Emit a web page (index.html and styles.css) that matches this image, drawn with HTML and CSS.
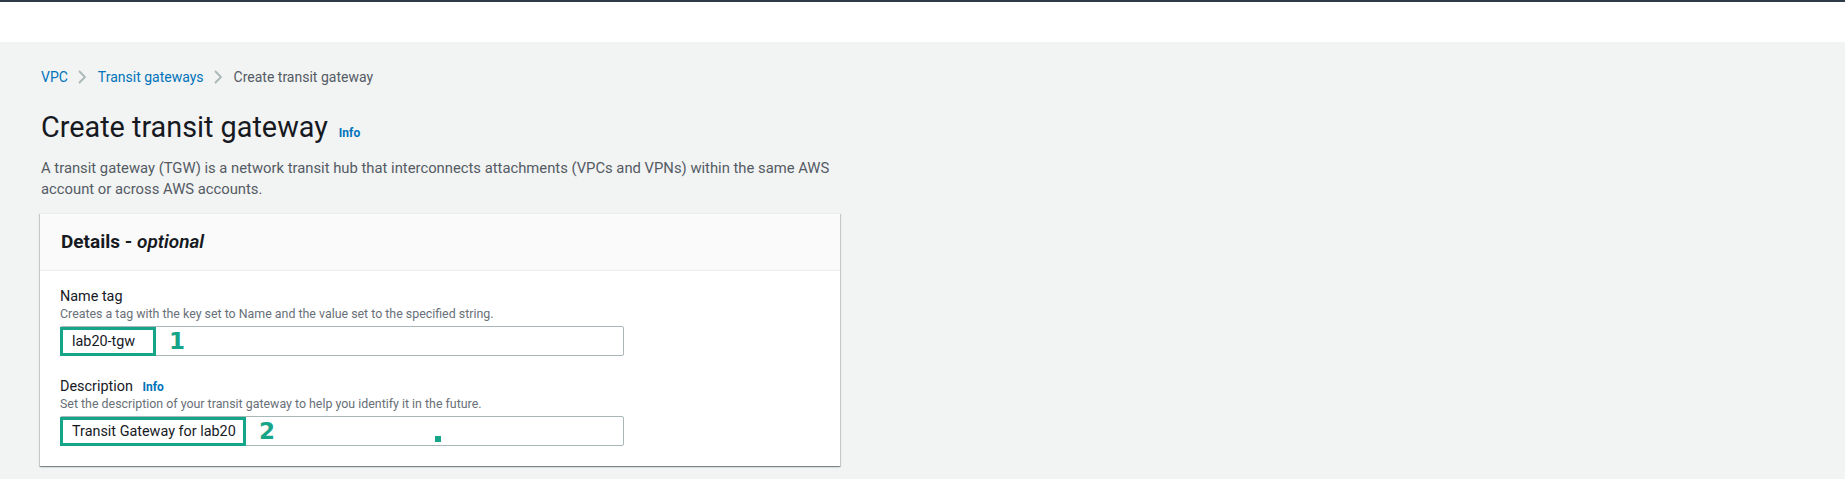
FILE: index.html
```html
<!DOCTYPE html>
<html lang="en">
<head>
<meta charset="utf-8">
<title>Create transit gateway</title>
<link rel="stylesheet" href="styles.css">
</head>
<body>
<header class="topbar"></header>
<main class="content">
  <nav class="breadcrumbs">
    <a class="crumb-link" href="#">VPC</a>
    <svg class="chev" viewBox="0 0 10 14" width="10" height="14"><path d="M2 1l6 6-6 6" fill="none" stroke="#aab7b8" stroke-width="1.8"/></svg>
    <a class="crumb-link" href="#">Transit gateways</a>
    <svg class="chev" viewBox="0 0 10 14" width="10" height="14"><path d="M2 1l6 6-6 6" fill="none" stroke="#aab7b8" stroke-width="1.8"/></svg>
    <span class="crumb-current">Create transit gateway</span>
  </nav>
  <div class="page-head">
    <h1 class="title">Create transit gateway</h1>
    <a class="info title-info" href="#">Info</a>
  </div>
  <p class="intro">A transit gateway (TGW) is a network transit hub that interconnects attachments (VPCs and VPNs) within the same AWS account or across AWS accounts.</p>
  <section class="card">
    <div class="card-head">Details - <em>optional</em></div>
    <div class="card-body">
      <div class="field">
        <div class="label">Name tag</div>
        <div class="hint">Creates a tag with the key set to Name and the value set to the specified string.</div>
        <div class="input">
          <span class="mark mark-1">lab20-tgw</span>
          <span class="num">1</span>
        </div>
      </div>
      <div class="field field-2">
        <div class="label">Description <a class="info" href="#">Info</a></div>
        <div class="hint">Set the description of your transit gateway to help you identify it in the future.</div>
        <div class="input">
          <span class="mark mark-2">Transit Gateway for lab20</span>
          <span class="num">2</span>
          <span class="dot"></span>
        </div>
      </div>
    </div>
  </section>
</main>
</body>
</html>
```

FILE: styles.css
```css
html, body {
  margin: 0;
  padding: 0;
}
body {
  font-family: Roboto, "Noto Sans", sans-serif;
  font-size: 14px;
  color: #16191f;
  background: #f2f3f3;
  height: 479px;
  overflow: hidden;
}
.topbar {
  height: 40px;
  background: #ffffff;
  border-top: 2px solid #2f3a48;
}
.content {
  padding: 25px 40px 0 41px;
  background: #f2f3f3;
}
.breadcrumbs {
  display: flex;
  align-items: center;
  height: 20px;
  line-height: 20px;
  font-size: 14px;
}
.crumb-link {
  color: #0073bb;
  text-decoration: none;
}
.chev {
  margin: 0 11px 0 9px;
}
.crumb-current {
  color: #545b64;
}
.page-head {
  display: flex;
  align-items: baseline;
  margin-top: 22px;
}
.title {
  margin: 0;
  font-size: 28.8px;
  line-height: 36px;
  font-weight: 400;
  color: #16191f;
}
.info {
  color: #0073bb;
  font-weight: 700;
  font-size: 12px;
  text-decoration: none;
}
.title-info {
  margin-left: 11px;
}
.intro {
  margin: 13px 0 0 0;
  width: 800px;
  font-size: 14.8px;
  line-height: 21px;
  color: #545b64;
}
.card {
  margin-top: 13px;
  margin-left: -1px;
  width: 800px;
  background: #ffffff;
  border-top: 1px solid #eaeded;
  box-shadow: 0 1px 1px 0 rgba(0, 28, 36, 0.3), 1px 1px 1px 0 rgba(0, 28, 36, 0.15), -1px 1px 1px 0 rgba(0, 28, 36, 0.15);
}
.card-head {
  background: #fafafa;
  border-bottom: 1px solid #eaeded;
  padding: 17px 21px 17px 21px;
  font-size: 19px;
  line-height: 22px;
  font-weight: 700;
  color: #16191f;
}
.card-head em {
  font-weight: 600;
  font-style: italic;
}
.card-body {
  padding: 17px 20px 20px 20px;
}
.field-2 {
  margin-top: 22px;
}
.label {
  line-height: 18px;
  font-size: 14.4px;
  color: #16191f;
}
.label .info {
  margin-left: 6px;
}
.hint {
  font-size: 12.4px;
  line-height: 16px;
  color: #687078;
}
.input {
  position: relative;
  margin-top: 4px;
  width: 562px;
  height: 28px;
  border: 1px solid #aab7b8;
  border-radius: 2px;
  display: flex;
  align-items: center;
  background: #ffffff;
}
.mark {
  box-sizing: border-box;
  height: 29px;
  margin-left: -1px;
  margin-top: 1px;
  padding: 0 0 0 9px;
  border: 3px solid #17a589;
  display: flex;
  align-items: center;
  color: #16191f;
  font-size: 14.4px;
}
.mark-1 {
  width: 96px;
}
.mark-2 {
  width: 186px;
}
.num {
  margin-left: 13px;
  font-family: "DejaVu Sans", "Liberation Sans", sans-serif;
  font-weight: 700;
  font-size: 23px;
  line-height: 24px;
  color: #17a589;
}
.dot {
  position: absolute;
  left: 374px;
  top: 19px;
  width: 6px;
  height: 6px;
  background: #17a589;
}
```
